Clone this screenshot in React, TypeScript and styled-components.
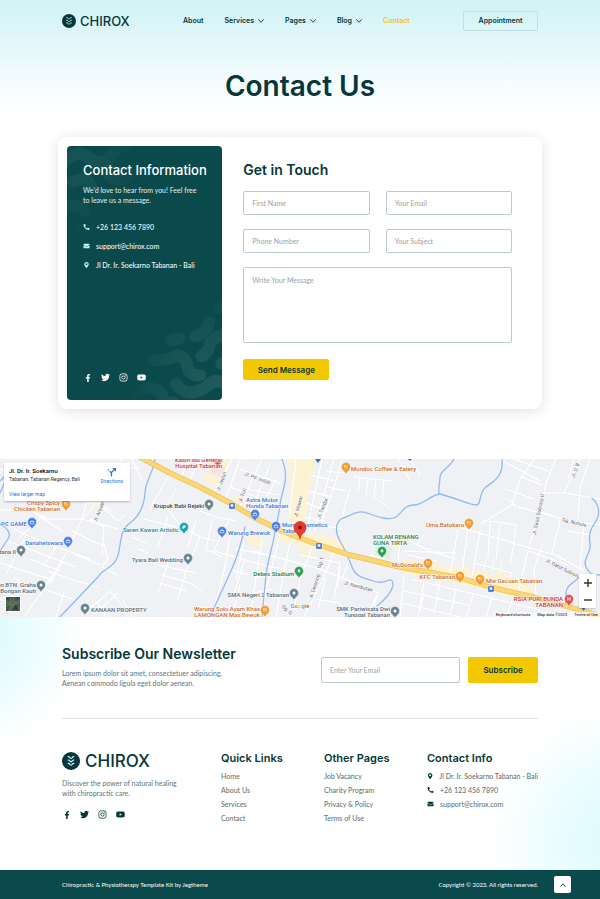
import React from "react";
import styled, { createGlobalStyle } from "styled-components";
import {
  FaEnvelope,
  FaFacebookF,
  FaInstagram,
  FaMapMarkerAlt,
  FaPhoneAlt,
  FaTwitter,
  FaYoutube,
} from "react-icons/fa";

const color = {
  ink: "#06373b",
  panel: "#0a4a4c",
  yellow: "#f2c800",
  muted: "#5f7476",
  field: "#b9cbcc",
  hint: "#9aa3a4",
};

const display = `Inter, "Liberation Sans", sans-serif`;
const body = `Lato, "Liberation Sans", sans-serif`;

const GlobalStyle = createGlobalStyle`
  *, *::before, *::after { box-sizing: border-box; }
  body { margin: 0; background: #fff; color: ${color.ink}; font: 400 7px/10px ${body}; }
  h1, h2, h3, p, ul { margin: 0; padding: 0; font-weight: 500; }
  ul { list-style: none; }
  a { color: inherit; text-decoration: none; }
  button, input, textarea { font: inherit; color: inherit; margin: 0; }
  button { cursor: pointer; }
  svg { display: block; }
`;

const Page = styled.div`
  min-height: 100vh;
  display: flex;
  flex-direction: column;
`;

/* ---------- header ---------- */

const Hero = styled.header`
  padding: 11px 62px 33px;
  background: linear-gradient(#d0f2f6 0, #e2f7fa 42px, #f6fdfe 85px, #fff 115px);
`;

const TopBar = styled.div`
  display: flex;
  align-items: center;
  justify-content: space-between;
  margin-bottom: 37px;
`;

const Brand = styled.a<{ $large?: boolean }>`
  display: flex;
  align-items: center;
  gap: ${(p) => (p.$large ? 5 : 4)}px;
  font: 500 ${(p) => (p.$large ? "17px/18px" : "13px/14px")} ${display};
  svg {
    width: ${(p) => (p.$large ? 18 : 14)}px;
    height: ${(p) => (p.$large ? 18 : 14)}px;
  }
`;

const Nav = styled.nav`
  display: flex;
  gap: 21px;
  font: 600 7px/10px ${display};
`;

const NavLink = styled.a<{ $active?: boolean }>`
  display: flex;
  align-items: center;
  gap: 4px;
  color: ${(p) => (p.$active ? color.yellow : color.ink)};
`;

const OutlineButton = styled.button`
  width: 75px;
  height: 20px;
  padding: 0;
  border: 1px solid #bfdfe2;
  border-radius: 2px;
  background: transparent;
  font: 600 7px/10px ${display};
`;

const PageTitle = styled.h1`
  font: 600 28px/36px ${display};
  text-align: center;
`;

/* ---------- contact card ---------- */

const Card = styled.section`
  margin: 0 58px 50px;
  padding: 9px;
  display: grid;
  grid-template-columns: 1fr 2fr;
  border-radius: 9px;
  background: #fff;
  box-shadow: 0 2px 14px rgba(0, 0, 0, 0.12);
`;

const InfoPanel = styled.div`
  position: relative;
  overflow: hidden;
  min-height: 254px;
  padding: 15px 12px 18px 16px;
  display: flex;
  flex-direction: column;
  border-radius: 4px;
  background: ${color.panel};
  color: #fff;
`;

const PanelPattern = styled.svg`
  position: absolute;
  inset: 0;
  width: 100%;
  height: 100%;
`;

const PanelContent = styled.div`
  position: relative;
  flex: 1;
  display: flex;
  flex-direction: column;
`;

const BlockTitle = styled.h2<{ $compact?: boolean }>`
  font: ${(p) => (p.$compact ? "500 13px" : "600 14px")}/18px ${display};
  white-space: nowrap;
`;

const PanelText = styled.p`
  margin: 6px 0 12px;
  font-weight: 400;
  color: #e2eeee;
  white-space: nowrap;
`;

const ContactList = styled.ul<{ $pitch: number; $light?: boolean }>`
  color: ${(p) => (p.$light ? "#f4fafa" : color.muted)};
  li {
    display: flex;
    align-items: center;
    gap: 6px;
    height: ${(p) => p.$pitch}px;
    white-space: nowrap;
  }
  svg {
    width: 7px;
    height: 6px;
    color: ${(p) => (p.$light ? "#c9f3f5" : color.ink)};
  }
`;

const Socials = styled.div<{ $push?: boolean }>`
  display: flex;
  gap: 9px;
  margin-top: ${(p) => (p.$push ? "auto" : "12px")};
  a {
    width: 9px;
    height: 9px;
    display: flex;
    align-items: center;
    justify-content: center;
  }
`;

const Form = styled.form`
  padding: 15px 21px 20px;
  display: flex;
  flex-direction: column;
  align-items: flex-start;
`;

const Fields = styled.div`
  width: 100%;
  margin: 12px 0 16px;
  display: grid;
  grid-template-columns: 1fr 1fr;
  gap: 14px 16px;
`;

const Input = styled.input`
  width: 100%;
  min-width: 0;
  height: 24px;
  padding: 0 8px;
  border: 1px solid ${color.field};
  border-radius: 2px;
  background: #fff;
  &::placeholder { color: ${color.hint}; opacity: 1; }
`;

const TextArea = styled.textarea`
  grid-column: 1 / -1;
  height: 76px;
  padding: 7px 8px;
  border: 1px solid ${color.field};
  border-radius: 2px;
  resize: none;
  &::placeholder { color: ${color.hint}; opacity: 1; }
`;

const SolidButton = styled.button<{ $w: number; $h: number }>`
  width: ${(p) => p.$w}px;
  height: ${(p) => p.$h}px;
  flex: none;
  padding: 0;
  border: 0;
  border-radius: 2px;
  background: ${color.yellow};
  font: 600 8px/10px ${display};
`;

/* ---------- map ---------- */

const MapFrame = styled.section`
  position: relative;
  height: 158px;
  overflow: hidden;
  font-family: Roboto, sans-serif;
`;

const MapCanvas = styled.svg`
  width: 100%;
  height: 100%;
  font-family: Roboto, sans-serif;
`;

const PlaceCard = styled.div`
  position: absolute;
  top: 4px;
  left: 4px;
  width: 126px;
  height: 38px;
  padding: 4px 7px 3px 5px;
  display: flex;
  justify-content: space-between;
  background: #fff;
  border-radius: 1px;
  box-shadow: 0 1px 2px rgba(0, 0, 0, 0.25);
  font-size: 5px;
  line-height: 8px;
  color: #333;
  white-space: nowrap;
`;

const PlaceText = styled.div`
  display: flex;
  flex-direction: column;
  justify-content: space-between;
  strong { display: block; font-size: 6px; font-weight: 500; color: #000; }
`;

const MapLink = styled.a`
  color: #1a73e8;
`;

const Directions = styled(MapLink)`
  display: flex;
  flex-direction: column;
  align-items: center;
`;

const SatelliteButton = styled.button`
  position: absolute;
  left: 5px;
  bottom: 5px;
  width: 16px;
  height: 16px;
  padding: 0;
  border: 1px solid #fff;
  border-radius: 1px;
  overflow: hidden;
  background: #43544a;
`;

const ZoomControls = styled.div`
  position: absolute;
  right: 4px;
  bottom: 9px;
  width: 17px;
  display: flex;
  flex-direction: column;
  background: #fff;
  border-radius: 1px;
  box-shadow: 0 1px 2px rgba(0, 0, 0, 0.2);
  button {
    height: 17px;
    padding: 0;
    border: 0;
    background: none;
    display: grid;
    place-items: center;
  }
`;

const MapCredits = styled.div`
  position: absolute;
  right: 0;
  bottom: 0;
  padding: 0 2px;
  display: flex;
  gap: 7px;
  background: rgba(255, 255, 255, 0.6);
  font-size: 4px;
  line-height: 5px;
  color: #000;
`;

/* ---------- footer ---------- */

const Footer = styled.footer`
  flex: 1;
  padding: 28px 62px 0;
  background:
    radial-gradient(circle at -30px 20px, #d6fafd 0, rgba(226, 251, 253, 0.8) 50px, rgba(255, 255, 255, 0) 115px),
    radial-gradient(circle at calc(100% + 25px) 225px, #dffafd 0, #e6fcfe 55px, rgba(255, 255, 255, 0) 135px),
    #fff;
`;

const Newsletter = styled.section`
  display: flex;
  align-items: center;
  justify-content: space-between;
  padding-bottom: 30px;
  border-bottom: 1px solid #d9e1e2;
`;

const Copy = styled.p`
  margin-top: 5px;
  font-weight: 400;
  color: ${color.muted};
`;

const SubscribeForm = styled.form`
  width: 217px;
  margin-top: 6px;
  display: flex;
  gap: 8px;
  input { height: 26px; }
`;

const FooterGrid = styled.div`
  padding: 30px 0 42px;
  display: grid;
  grid-template-columns: 159fr 103fr 103fr 111fr;
  > * { min-width: 0; }
`;

const FooterTitle = styled.h3`
  font: 600 11px/18px ${display};
  white-space: nowrap;
  margin-bottom: 2px;
`;

const About = styled.div`
  padding-top: 3px;
  ${Copy} { margin-top: 8px; }
`;

const LinkList = styled.ul`
  color: ${color.muted};
  li { height: 14px; line-height: 14px; }
`;

const BottomBar = styled.div`
  position: relative;
  height: 29px;
  padding: 0 62px;
  display: flex;
  align-items: center;
  justify-content: space-between;
  background: ${color.panel};
  color: #fff;
  font-size: 6px;
`;

const TopButton = styled.button`
  position: absolute;
  right: 29px;
  bottom: 6px;
  width: 17px;
  height: 17px;
  padding: 0;
  border: 0;
  border-radius: 2px;
  background: #fff;
  color: ${color.ink};
  display: grid;
  place-items: center;
`;

/* ---------- drawings ---------- */

const SpineMark = () => (
  <svg viewBox="0 0 18 18" aria-hidden="true">
    <circle cx="9" cy="9" r="9" fill={color.ink} />
    <g fill="none" stroke="#c8f3f5" strokeWidth="1.200" strokeLinecap="round" strokeLinejoin="round">
      {[4.6, 8, 11.4].map((y) => (
        <path key={y} d={`M6.100 ${y}q1.300.1 1.700.9 .5.9 1.200.9t1.200-.9q.4-.8 1.700-.9`} />
      ))}
    </g>
  </svg>
);

const Chevron = ({ up }: { up?: boolean }) => (
  <svg width="6" height="4" viewBox="0 0 6 4" fill="none" stroke="currentColor" strokeWidth="0.9" strokeLinecap="round" strokeLinejoin="round">
    <path d={up ? "M.6 3.400 3 .8l2.400 2.600" : "M.5.6 3 3.300 5.500.6"} />
  </svg>
);

const Pattern = () => (
  <PanelPattern viewBox="0 0 155 254" preserveAspectRatio="xMidYMid slice" aria-hidden="true">
    <defs>
      <radialGradient id="fadeLow" gradientUnits="userSpaceOnUse" cx="150" cy="236" r="90">
        <stop offset="0" stopColor="#fff" stopOpacity="0.09" />
        <stop offset="0.5" stopColor="#fff" stopOpacity="0.06" />
        <stop offset="1" stopColor="#fff" stopOpacity="0" />
      </radialGradient>
      <radialGradient id="fadeHigh" gradientUnits="userSpaceOnUse" cx="10" cy="18" r="75">
        <stop offset="0" stopColor="#fff" stopOpacity="0.06" />
        <stop offset="1" stopColor="#fff" stopOpacity="0" />
      </radialGradient>
    </defs>
    <g fill="none" strokeWidth="12" strokeLinecap="round" strokeLinejoin="round">
      <path
        stroke="url(#fadeLow)"
        d="M158 188Q144 192 142 200T134 210M154 217h6M86 214Q104 214 110 209 118 210 120 220T133 229M109 238Q116 248 126 246T142 238 158 238M64 249Q74 240 84 242T96 252 106 256M128 190Q140 186 142 176M152 162l8-8M104 194l8-2"
      />
      <path
        stroke="url(#fadeHigh)"
        d="M-4 18Q10 2 22 12T44 10 60 0M6 36Q20 30 24 40T40 50M0 62Q12 56 18 66M42 30Q54 38 62 28M14 84l6 2"
      />
    </g>
  </PanelPattern>
);

type Kind = "food" | "shop" | "place" | "park" | "art" | "care";
const pinColor: Record<Kind, string> = {
  food: "#f29a2e",
  shop: "#4a80ea",
  place: "#6a828c",
  park: "#2e9e50",
  art: "#17a5b3",
  care: "#e2504a",
};
const labelColor: Record<Kind, string> = {
  food: "#cf6a1c",
  shop: "#3a72dc",
  place: "#596a74",
  park: "#188040",
  art: "#148a98",
  care: "#cc3333",
};

type Place = { kind: Kind; pin: [number, number]; lines: string[]; at: [number, number]; end?: boolean; ink?: string };

const places: Place[] = [
  { kind: "food", pin: [66, 46], lines: ["Crispy Spicy", "Chicken Tabanan"], at: [60, 46], end: true },
  { kind: "shop", pin: [32, 64], lines: ["PC GAME"], at: [27, 67], end: true },
  { kind: "shop", pin: [68, 83], lines: ["Danaheiswara"], at: [63, 86], end: true },
  { kind: "place", pin: [21, 92], lines: ["dana II"], at: [16, 95], end: true },
  { kind: "place", pin: [41, 127], lines: ["an BTN. Graha", "Bongan Kauh"], at: [36, 128], end: true },
  { kind: "place", pin: [85, 150], lines: ["KANAAN PROPERTY"], at: [91, 153] },
  { kind: "art", pin: [184, 69], lines: ["Saren Kawan Artistic"], at: [179, 73], end: true },
  { kind: "place", pin: [188, 100], lines: ["Tyara Bali Wedding"], at: [183, 103], end: true },
  { kind: "place", pin: [209, 46], lines: ["Krupuk Babi Rejeki"], at: [204, 49], end: true, ink: "#3c4043" },
  { kind: "care", pin: [218, 2], lines: ["Kasih Ibu General", "Hospital Tabanan"], at: [222, 3], end: true },
  { kind: "shop", pin: [255, 56], lines: ["Astra Motor", "Honda Tabanan"], at: [246, 43] },
  { kind: "food", pin: [346, 9], lines: ["Mondoc Coffee & Eatery"], at: [351, 12] },
  { kind: "shop", pin: [222, 73], lines: ["Warung Brewok"], at: [228, 76] },
  { kind: "shop", pin: [276, 68], lines: ["Murni Cosmetics", "Tabanan"], at: [282, 68] },
  { kind: "park", pin: [382, 93], lines: ["KOLAM RENANG", "GUNA TIRTA"], at: [373, 80] },
  { kind: "park", pin: [299, 113], lines: ["Debes Stadium"], at: [294, 117], end: true },
  { kind: "place", pin: [294, 135], lines: ["SMA Negeri 2 Tabanan"], at: [289, 138], end: true },
  { kind: "food", pin: [265, 152], lines: ["Warung Soto Ayam Khas", "LAMONGAN Mas Bewok"], at: [260, 152], end: true },
  { kind: "place", pin: [395, 153], lines: ["SMK Pariwisata Dwi", "Tunggal Tabanan"], at: [390, 152], end: true },
  { kind: "food", pin: [469, 65], lines: ["Uma Batukaru"], at: [464, 68], end: true },
  { kind: "food", pin: [428, 105], lines: ["McDonald's"], at: [423, 108], end: true },
  { kind: "food", pin: [460, 118], lines: ["KFC Tabanan"], at: [455, 120], end: true },
  { kind: "food", pin: [480, 121], lines: ["Mie Gacoan Tabanan"], at: [486, 124] },
  { kind: "care", pin: [569, 141], lines: ["RSIA PURI BUNDA", "TABANAN"], at: [563, 142], end: true },
];

const streets: [string, number, number, number][] = [
  ["Jl. Jepun", 223, 23, -70],
  ["Jl. Turi", 244, 37, -72],
  ["Jl. Pd. Indah", 257, 21, 20],
  ["Jl. Mawar", 300, 48, -76],
  ["Jl. Tandur", 324, 50, -68],
  ["Jl. Anyelir VII", 102, 50, -68],
  ["Gg. 1", 322, 104, -75],
  ["Jl. Ceroring", 316, 128, -72],
  ["Jl. Rambutan", 358, 129, 15],
  ["Gg. G", 286, 152, 42],
  ["Jl. Gatot Subroto II", 540, 56, -78],
  ["Gg. Nuhola", 574, 65, 14],
  ["Jl. Gatot Subroto", 562, 111, 27],
  ["Jl. D. B", 577, 12, -70],
];

const mainRoad = "M138-3 170 14 200 28 232 45 255 59 280 71 300 79 319 86 350 96 400 108 460 119 490 128 533 138 580 151 604 158";

const minorRoads = [
  "M122 0 108 22 92 50 82 60 64 98 44 130 24 158",
  "M0 51 30 51 48 60 82 60 118 70M82 60 86 44 98 44 118 62 124 56",
  "M30 51 62 72M20 78 44 56M14 70 40 82 90 100M8 82 76 108M26 76 6 116M56 88 44 106M76 96 100 106",
  "M48 112 70 120 98 128M44 130 72 140M62 104 50 124M30 100 60 112M0 104 24 112 50 120M104 86 108 100 102 108 118 116",
  "M90 60 104 68 102 96M98 44 112 52M72 72 96 84 104 86",
  "M92 148 110 132 122 146M84 152 102 140M96 154 118 134M106 158 98 144M122 140 132 158",
  "M176 30 166 48 180 66 200 78 216 82M200 78 186 112 178 140M162 116 190 124 202 132M160 124 186 132M158 106 196 114M168 104 158 134M196 62 188 88",
  "M170 14 150 50M190 0 180 20M200 0 188 24M168 58 158 88M144 60 176 68",
  "M226 40 240 0M214 34 234-4M240 48 256 12 262 0M250 54 270 6M256 58 276 20M240 10 280 24M248 30 278 36M230 28 256 38",
  "M200 52 216 58 236 62M212 62 206 90 222 98M228 62 214 92M230 78 224 112 212 158M244 82 236 120M236 90 268 96M244 102 232 142",
  "M214 92 270 108 300 112M234 112 260 118M240 126 232 158M262 80 250 158M280 76 266 130 262 158",
  "M290 84 284 112 276 158M254 92 320 110 350 122 378 134 374 148M312 88 300 120 294 150M334 94 322 122 304 158",
  "M322 0 306 74M334 0 322 42 314 74M342 0 336 22 320 68M310 16 336 22M308 32 332 38M306 44 328 52M304 58 324 62M296 0 288 70",
  "M350 30 342 58M326 12 344 14M328 28 346 32M320 66 342 70",
  "M354 18 392 22M360 18 358 32M368 20 366 36M376 20 374 38 390 50M384 22 382 40M398 0 410 22M410 0 420 16",
  "M366 106 372 96 384 100M400 84 398 102M408 96 436 102M410 82 430 92 456 100M404 92 456 94M418 84 424 76",
  "M458 70 450 116M468 70 462 112M480 72 472 118M458 68 514 84M490 64 488 98M500 66 496 100M514 84 510 106M474 104 512 114 508 126M486 100 484 110M494 100 492 112M502 102 500 114M490 62 516 66 514 84",
  "M534 0 520 20 512 46 482 64M500 0 540 22M514 0 548 12M522 18 542 26M556 0 546 24 544 34 528 92 518 134",
  "M506 30 534 40M512 46 526 50 570 62 600 66M508 40 520 50M512 84 556 96 584 112M538 52 552 56M544 34 564 34 600 40M564 34 580 0M574 0 568 20",
  "M590 0 580 28 578 60M584 66 580 110M560 62 552 94M528 92 568 106M542 86 534 110 536 136M568 72 590 76",
  "M404 116 400 158M410 120 470 134 536 150M404 132 468 146M402 144 460 158M424 122 418 158M440 124 434 154M456 130 450 158M474 134 466 158M492 138 486 158M512 142 506 158M420 152 424 134M536 150 548 158",
  "M300 96 340 104 334 140M340 108 338 128M272 130 246 136M316 140 340 144 352 158M378 134 366 158M350 98 342 120M326 118 318 150",
  "M0 10 4 12M132 0 142 22M140 8 120 10M0 140 18 148M14 118 28 130M64 134 56 158M132 78 146 84M138 90 148 94",
];

const rivers = [
  "M155 0C152 18 146 20 145 34S138 58 130 64 122 74 119 92 104 108 98 118L60 158",
  "M282 0C290 20 282 30 280 46S276 66 274 78 268 100 266 116L262 158",
  "M245 68C240 88 238 96 230 114S216 144 210 158",
  "M502-2C504 18 494 22 486 28S482 46 476 46 458 40 440 35C430 36 424 46 414 46S402 54 396 58 378 58 367 54 350 58 343 59C336 62 334 72 340 82S348 98 352 108 362 118 373 122 388 120 391 121 396 132 377 147",
  "M454 0C450 8 440 12 440 18S438 30 439 35",
  "M592 39C600 46 600 56 596 62S588 74 590 84 582 100 586 108 594 116 600 116",
  "M582 116C574 124 566 126 566 134S568 142 564 146",
  "M0 65C6 68 12 74 8 80L0 92M8 16 0 34M0 22 4 18",
];

const MapPin = ({ x, y, kind }: { x: number; y: number; kind: Kind }) => (
  <g transform={`translate(${x} ${y})`}>
    <path d="M0 6C-1 3.500-4.500 2.500-4.500-1a4.500 4.500 0 0 1 9 0c0 3.500-3.500 4.500-4.500 7Z" fill={pinColor[kind]} stroke="#fff" strokeWidth="0.4" />
    {kind === "food" && <path d="M-1.400-3v1.800M-.7-3v1.800M-1-1.200v2M1.100-3v3.800" stroke="#fff" strokeWidth="0.6" fill="none" />}
    {kind === "shop" && <path d="M-1.800-1.500h3.600v2.300h-3.600ZM-.9-1.500a.9.9 0 0 1 1.800 0" stroke="#fff" strokeWidth="0.6" fill="none" />}
    {kind === "care" && <path d="M-1.200-3v3.800M1.200-3v3.800M-1.200-1.100h2.400" stroke="#fff" strokeWidth="0.7" fill="none" />}
    {kind === "park" && <path d="M0-3.200 1.800-.4H-1.800ZM-.3-.4h.6v1.300h-.6Z" fill="#fff" />}
    {kind === "art" && <path d="M-1.800.4c0-3.800 3.600-3.800 3.600-1.400 0 1-1.800 0-1.800 1.400Z" fill="#fff" />}
    {kind === "place" && <circle cy="-1" r="1.500" fill="#fff" />}
  </g>
);

const StreetMap = () => (
  <MapCanvas viewBox="0 0 600 158" preserveAspectRatio="xMidYMid slice" aria-label="Street map of Tabanan">
    <rect x="-600" width="1800" height="158" fill="#eff1f4" />
    <g fill="#fdf3d3">
      <path d="M288 0h28l-8 40-4 36-18-6 4-34ZM208 0h22l-12 28-14-6ZM270 64l60 14 18 8-6 12-62-16ZM250 72l14 8-2 10-14-6Z" />
      <path d="M404 100l70 10 34 10 30 10-4 12-60-14-70-14ZM88 42l8-2 2 8-8 1ZM300 88l14 4-2 9-12-3ZM236 34l14 6-4 8-12-6ZM496 112l16 4-2 8-14-4Z" />
    </g>
    <path d="M212 6l14 3-3 10-14-4Z" fill="#fbe3e3" />
    <path d="M376 86l16 3-3 12-14-3Z" fill="#dff1e3" />
    <g fill="none" strokeLinejoin="round" strokeLinecap="round">
      {minorRoads.map((d) => (
        <path key={d} d={d} stroke="#e4e7eb" strokeWidth="2" />
      ))}
      {minorRoads.map((d) => (
        <path key={d} d={d} stroke="#fff" strokeWidth="1.500" />
      ))}
      {rivers.map((d) => (
        <path key={d} d={d} stroke="#94b8f3" strokeWidth="1.300" />
      ))}
      <path d={mainRoad} stroke="#eebf4e" strokeWidth="5.400" />
      <path d={mainRoad} stroke="#fbd674" strokeWidth="4.200" />
    </g>
    {[[232, 47], [319, 87], [491, 130]].map(([x, y]) => (
      <g key={x} transform={`translate(${x} ${y})`}>
        <rect x="-3" y="-3" width="6" height="6" rx="1" fill="#2f6fdd" stroke="#fff" strokeWidth="0.3" />
        <path d="M-1.200-1.400h2.400v1.800h-2.400ZM-.9 1v.6M.9 1v.6" fill="#fff" stroke="#fff" strokeWidth="0.4" />
      </g>
    ))}
    <path d="M315 0h6l-3 4ZM408 0h4l-2 2ZM581 148h5l-2.500 4Z" fill="#2f6fdd" />
    <g fontSize="5" fill="#5c6063" stroke="#fff" strokeWidth="0.8" paintOrder="stroke" textAnchor="middle">
      {streets.map(([name, x, y, turn]) => (
        <text key={name} transform={`translate(${x} ${y}) rotate(${turn})`}>{name}</text>
      ))}
    </g>
    {places.map((p) => (
      <g key={p.lines[0]}>
        <MapPin x={p.pin[0]} y={p.pin[1]} kind={p.kind} />
        <g fontSize="6" fontWeight="500" fill={p.ink ?? labelColor[p.kind]} stroke="#fff" strokeWidth="0.8" paintOrder="stroke" textAnchor={p.end ? "end" : "start"}>
          {p.lines.map((line, i) => (
            <text key={line} x={p.at[0]} y={p.at[1] + i * 6}>{line}</text>
          ))}
        </g>
      </g>
    ))}
    <path d="M300 80c-1-6-6-6.500-6-11.500a6 6 0 0 1 12 0c0 5-5 5.500-6 11.500Z" fill="#ea3a30" stroke="#b5231b" strokeWidth="0.6" />
    <circle cx="300" cy="68.500" r="2" fill="#8c1710" />
    <text x="300" y="149" fontSize="6" fontWeight="500" textAnchor="middle" stroke="#fff" strokeWidth="1" paintOrder="stroke">
      <tspan fill="#4285f4">G</tspan><tspan fill="#ea4335">o</tspan><tspan fill="#fbbc05">o</tspan><tspan fill="#4285f4">g</tspan><tspan fill="#34a853">l</tspan><tspan fill="#ea4335">e</tspan>
    </text>
  </MapCanvas>
);

const SocialLinks = ({ push }: { push?: boolean }) => (
  <Socials $push={push}>
    <a href="#facebook" aria-label="Facebook"><FaFacebookF size={8} /></a>
    <a href="#twitter" aria-label="Twitter"><FaTwitter size={9} /></a>
    <a href="#instagram" aria-label="Instagram"><FaInstagram size={9} /></a>
    <a href="#youtube" aria-label="YouTube"><FaYoutube size={9} /></a>
  </Socials>
);

const navItems = [
  { label: "About" },
  { label: "Services", menu: true },
  { label: "Pages", menu: true },
  { label: "Blog", menu: true },
  { label: "Contact", active: true },
];

const footerLinks = [
  { title: "Quick Links", links: ["Home", "About Us", "Services", "Contact"] },
  { title: "Other Pages", links: ["Job Vacancy", "Charity Program", "Privacy & Policy", "Terms of Use"] },
];

const stop = (e: React.FormEvent) => e.preventDefault();

export default function App() {
  return (
    <Page>
      <GlobalStyle />
      <Hero>
        <TopBar>
          <Brand href="#home"><SpineMark />CHIROX</Brand>
          <Nav>
            {navItems.map((item) => (
              <NavLink key={item.label} href={`#${item.label.toLowerCase()}`} $active={item.active}>
                {item.label}
                {item.menu && <Chevron />}
              </NavLink>
            ))}
          </Nav>
          <OutlineButton type="button">Appointment</OutlineButton>
        </TopBar>
        <PageTitle>Contact Us</PageTitle>
      </Hero>

      <Card>
        <InfoPanel>
          <Pattern />
          <PanelContent>
            <BlockTitle $compact>Contact Information</BlockTitle>
            <PanelText>We'd love to hear from you! Feel free<br />to leave us a message.</PanelText>
            <ContactList $pitch={19} $light>
              <li><FaPhoneAlt />+26 123 456 7890</li>
              <li><FaEnvelope />support@chirox.com</li>
              <li><FaMapMarkerAlt />Jl Dr. Ir. Soekarno Tabanan - Bali</li>
            </ContactList>
            <SocialLinks push />
          </PanelContent>
        </InfoPanel>
        <Form onSubmit={stop}>
          <BlockTitle>Get in Touch</BlockTitle>
          <Fields>
            <Input aria-label="First Name" placeholder="First Name" />
            <Input aria-label="Your Email" type="email" placeholder="Your Email" />
            <Input aria-label="Phone Number" type="tel" placeholder="Phone Number" />
            <Input aria-label="Your Subject" placeholder="Your Subject" />
            <TextArea aria-label="Write Your Message" placeholder="Write Your Message" />
          </Fields>
          <SolidButton $w={86} $h={21}>Send Message</SolidButton>
        </Form>
      </Card>

      <MapFrame>
        <StreetMap />
        <PlaceCard>
          <PlaceText>
            <div>
              <strong>Jl. Dr. Ir. Soekarno</strong>
              Tabanan, Tabanan Regency, Bali
            </div>
            <MapLink href="#map">View larger map</MapLink>
          </PlaceText>
          <Directions href="#directions">
            <svg width="10" height="10" viewBox="0 0 10 10" fill="none" stroke="#1a73e8" strokeWidth="1.200">
              <path d="M4.500 9.500V5.500L7.800 2.200M4.500 6 2.800 4.200" />
              <path d="M5.800 1.600h2.600v2.600M1.900 3.300 1 2.400" />
            </svg>
            Directions
          </Directions>
        </PlaceCard>
        <SatelliteButton type="button" aria-label="Show satellite imagery">
          <svg width="14" height="14" viewBox="0 0 14 14">
            <path d="M0 3 5 1l4 4 5-3v4L8 9l-3 5H2l2-6-4-1Z" fill="#596a58" />
            <path d="M7 0l2 5 3 3 2 6M0 10l4-3 5 2" stroke="#75786a" strokeWidth="0.8" fill="none" />
            <path d="M9 8l3 1-1 4-3-1ZM1 1l2 1-1 3Z" fill="#2c3d38" />
          </svg>
        </SatelliteButton>
        <ZoomControls>
          <button type="button" aria-label="Zoom in">
            <svg width="8" height="8" viewBox="0 0 8 8" stroke="#333" strokeWidth="1.400"><path d="M4 0v8M0 4h8" /></svg>
          </button>
          <button type="button" aria-label="Zoom out">
            <svg width="8" height="8" viewBox="0 0 8 8" stroke="#333" strokeWidth="1.400"><path d="M0 4h8" /></svg>
          </button>
        </ZoomControls>
        <MapCredits>
          <span>Keyboard shortcuts</span>
          <span>Map data ©2023</span>
          <a href="#terms">Terms of Use</a>
        </MapCredits>
      </MapFrame>

      <Footer>
        <Newsletter>
          <div>
            <BlockTitle>Subscribe Our Newsletter</BlockTitle>
            <Copy>Lorem ipsum dolor sit amet, consectetuer adipiscing.<br />Aenean commodo ligula eget dolor aenean.</Copy>
          </div>
          <SubscribeForm onSubmit={stop}>
            <Input aria-label="Enter Your Email" type="email" placeholder="Enter Your Email" />
            <SolidButton $w={70} $h={26}>Subscribe</SolidButton>
          </SubscribeForm>
        </Newsletter>
        <FooterGrid>
          <About>
            <Brand href="#home" $large><SpineMark />CHIROX</Brand>
            <Copy>Discover the power of natural healing<br />with chiropractic care.</Copy>
            <SocialLinks />
          </About>
          {footerLinks.map((group) => (
            <div key={group.title}>
              <FooterTitle>{group.title}</FooterTitle>
              <LinkList>
                {group.links.map((label) => (
                  <li key={label}><a href={`#${label.toLowerCase().replace(/\W+/g, "-")}`}>{label}</a></li>
                ))}
              </LinkList>
            </div>
          ))}
          <div>
            <FooterTitle>Contact Info</FooterTitle>
            <ContactList $pitch={14}>
              <li><FaMapMarkerAlt />Jl Dr. Ir. Soekarno Tabanan - Bali</li>
              <li><FaPhoneAlt />+26 123 456 7890</li>
              <li><FaEnvelope />support@chirox.com</li>
            </ContactList>
          </div>
        </FooterGrid>
      </Footer>

      <BottomBar>
        <span>Chiropractic &amp; Physiotherapy Template Kit by Jegtheme</span>
        <span>Copyright © 2023. All rights reserved.</span>
        <TopButton type="button" aria-label="Back to top"><Chevron up /></TopButton>
      </BottomBar>
    </Page>
  );
}
